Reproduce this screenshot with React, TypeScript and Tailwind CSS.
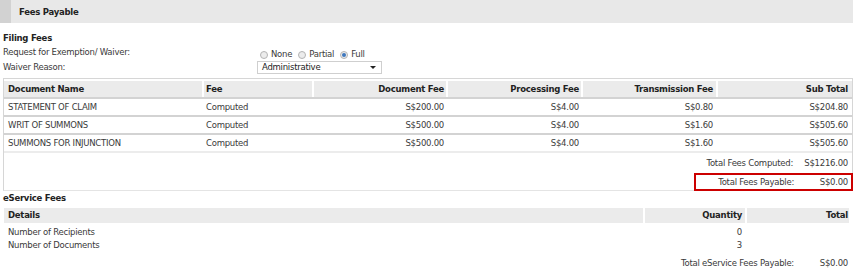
import React from 'react'

const rows = [
  { name: 'STATEMENT OF CLAIM', fee: 'Computed', doc: 'S$200.00', proc: 'S$4.00', trans: 'S$0.80', sub: 'S$204.80' },
  { name: 'WRIT OF SUMMONS', fee: 'Computed', doc: 'S$500.00', proc: 'S$4.00', trans: 'S$1.60', sub: 'S$505.60' },
  { name: 'SUMMONS FOR INJUNCTION', fee: 'Computed', doc: 'S$500.00', proc: 'S$4.00', trans: 'S$1.60', sub: 'S$505.60' },
]

const COLS = 'grid grid-cols-[200px_110px_134px_135px_135px_134px]'

function Radio({ checked, label }: { checked?: boolean; label: string }) {
  return (
    <span className="inline-flex items-center mr-[6px]">
      <span className="inline-flex w-[8px] h-[8px] rounded-full border border-[#b4b4b4] bg-[#ececec] items-center justify-center mr-[3px]">
        {checked && <span className="w-[4px] h-[4px] rounded-full bg-[#3f78bd]" />}
      </span>
      {label}
    </span>
  )
}

export default function App() {
  return (
    <div
      className="w-[855px] h-[270px] bg-white text-[#3a3a3a] text-[8.5px] tracking-[-0.25px] leading-none overflow-hidden"
      style={{ fontFamily: '"DejaVu Sans", Verdana, sans-serif' }}
    >
      {/* section header */}
      <div className="flex h-[23px] w-[853px] bg-[#e8e8e8]">
        <div className="w-[11px] bg-[#d2d2d2]" />
        <div className="pl-[8px] pt-[1px] flex items-center font-bold text-[#222]">Fees Payable</div>
      </div>

      <div className="mt-[8px] h-[14px] pl-[3px] flex items-center font-bold text-[#222]">Filing Fees</div>

      <div className="flex h-[15px] items-center">
        <div className="w-[260px] pl-[3px]">Request for Exemption/ Waiver:</div>
        <div className="flex items-center mt-[4px]">
          <Radio label="None" />
          <Radio label="Partial" />
          <Radio label="Full" checked />
        </div>
      </div>
      <div className="flex h-[15px] items-center">
        <div className="w-[257px] pl-[3px]">Waiver Reason:</div>
        <div className="w-[125px] h-[13px] border border-[#cfcfcf] flex items-center justify-between pl-[4px] pr-[5px] text-[#222]">
          <span>Administrative</span>
          <span className="w-0 h-0 border-l-[3px] border-r-[3px] border-t-[3px] border-l-transparent border-r-transparent border-t-[#222]" />
        </div>
      </div>

      {/* filing fees table */}
      <div className="ml-[3px] mt-[3px] w-[850px] border border-[#d6d6d6] border-b-[#e4e4e4]">
        <div className="pt-[2px]">
          <div className={`${COLS} h-[16px] font-bold text-[#222]`}>
            <div className="bg-[#ebebeb] mr-[2px] flex items-center pl-[4px]">Document Name</div>
            <div className="bg-[#ebebeb] mr-[2px] flex items-center pl-[2px]">Fee</div>
            <div className="bg-[#ebebeb] mr-[2px] flex items-center justify-end pr-[2px]">Document Fee</div>
            <div className="bg-[#ebebeb] mr-[2px] flex items-center justify-end pr-[2px]">Processing Fee</div>
            <div className="bg-[#ebebeb] mr-[2px] flex items-center justify-end pr-[3px]">Transmission Fee</div>
            <div className="bg-[#ebebeb] flex items-center justify-end pr-[4px]">Sub Total</div>
          </div>
        </div>
        {rows.map(r => (
          <div key={r.name} className={`${COLS} h-[18px] items-center border-t-2 border-t-[#d3d3d3]`}>
            <div className="pl-[4px]">{r.name}</div>
            <div className="pl-[2px]">{r.fee}</div>
            <div className="text-right pr-[4px]">{r.doc}</div>
            <div className="text-right pr-[4px]">{r.proc}</div>
            <div className="text-right pr-[5px]">{r.trans}</div>
            <div className="text-right pr-[4px]">{r.sub}</div>
          </div>
        ))}
        <div className="border-t-2 border-t-[#ececec] flex justify-end h-[22px] items-center pr-[4px]">
          <span>Total Fees Computed:</span>
          <span className="w-[55px] text-right">S$1216.00</span>
        </div>
        <div className="flex justify-end">
          <div className="w-[159px] h-[18px] border-2 border-[#cc0000] flex items-center justify-end pr-[3px] -mr-px -mb-px">
            <span>Total Fees Payable:</span>
            <span className="w-[54px] text-right">S$0.00</span>
          </div>
        </div>
      </div>

      <div className="h-[14px] pl-[3px] flex items-center font-bold text-[#222]">eService Fees</div>

      {/* eservice fees table */}
      <div className="ml-[4px] mt-[3px] w-[849px]">
        <div className="grid grid-cols-[641px_102px_102px] h-[15px] font-bold text-[#222]">
          <div className="bg-[#ebebeb] mr-[2px] flex items-center pl-[4px]">Details</div>
          <div className="bg-[#ebebeb] mr-[2px] flex items-center justify-end pr-[3px]">Quantity</div>
          <div className="bg-[#ebebeb] flex items-center justify-end pr-[1px]">Total</div>
        </div>
        <div className="mt-[2px] grid grid-cols-[641px_102px_102px] h-[14px] items-center">
          <div className="pl-[4px]">Number of Recipients</div>
          <div className="text-right pr-[5px]">0</div>
          <div />
        </div>
        <div className="grid grid-cols-[641px_102px_102px] h-[13px] items-center">
          <div className="pl-[4px]">Number of Documents</div>
          <div className="text-right pr-[5px]">3</div>
          <div />
        </div>
      </div>
      <div className="mt-[4px] flex justify-end w-[852px] h-[14px] items-center pr-[4px]">
        <span>Total eService Fees Payable:</span>
        <span className="w-[54px] text-right">S$0.00</span>
      </div>
    </div>
  )
}
